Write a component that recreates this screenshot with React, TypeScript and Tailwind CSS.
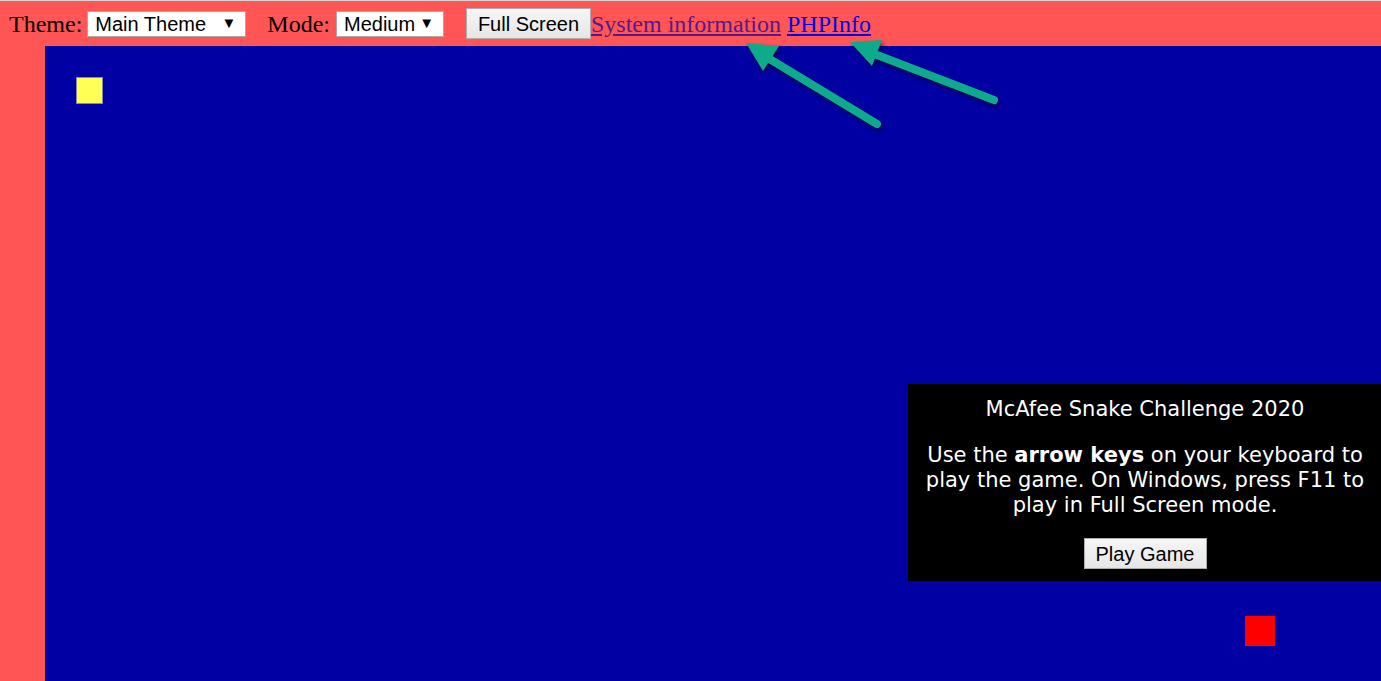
import React from 'react';

const FakeSelect: React.FC<{ label: string; width: string }> = ({ label, width }) => (
  <div
    className={`flex h-[26px] items-center justify-between border border-[#a9a9a9] bg-white pl-[7px] pr-[9px] text-[20px] text-black ${width}`}
    style={{ fontFamily: '"Liberation Sans", Arial, sans-serif' }}
  >
    <span>{label}</span>
    <span className="text-[15px]">▼</span>
  </div>
);

const Arrow: React.FC<{ tail: [number, number]; neck: [number, number]; head: string }> = ({ tail, neck, head }) => (
  <g>
    <line x1={tail[0]} y1={tail[1]} x2={neck[0]} y2={neck[1]} stroke="#0dab8b" strokeWidth="8" strokeLinecap="round" />
    <polygon points={head} fill="#0dab8b" />
  </g>
);

export default function App() {
  return (
    <div className="relative h-[681px] w-[1381px] overflow-hidden border-t border-[#d4d4d4] bg-[#ff5555]">
      {/* barre du haut */}
      <div
        className="flex h-[45px] items-center pl-[9px] text-[24px] text-black"
        style={{ fontFamily: '"Liberation Serif", "Times New Roman", serif' }}
      >
        <span>Theme:</span>
        <div className="ml-[5px]">
          <FakeSelect label="Main Theme" width="w-[159px]" />
        </div>
        <span className="ml-[21px]">Mode:</span>
        <div className="ml-[6px]">
          <FakeSelect label="Medium" width="w-[108px]" />
        </div>
        <button
          className="ml-[22px] h-[31px] w-[125px] border border-[#adadad] bg-gradient-to-b from-[#f6f6f6] to-[#e6e6e6] text-[20px] text-black"
          style={{ fontFamily: '"Liberation Sans", Arial, sans-serif' }}
        >
          Full Screen
        </button>
        <a className="text-[#551a8b] underline">System information</a>
        <a className="ml-[6px] text-[#0000ee] underline">PHPInfo</a>
      </div>

      {/* zone de jeu */}
      <div className="relative ml-[45px] h-[636px] bg-[#0000a3]">
        <div className="absolute left-[31px] top-[31px] h-[27px] w-[27px] border border-[#8a8aa0] bg-[#ffff55]" />
        <div className="absolute left-[1200px] top-[570px] h-[30px] w-[30px] bg-[#ff0000]" />

        <div
          className="absolute left-[863px] top-[338px] flex w-[474px] flex-col items-center bg-black pb-[12px] pt-[13px] text-center text-[21px] leading-[25px] text-white"
          style={{ fontFamily: '"DejaVu Sans", Verdana, sans-serif' }}
        >
          <p>McAfee Snake Challenge 2020</p>
          <p className="mt-[21px] px-[10px]">
            Use the <b>arrow keys</b> on your keyboard to play the game. On Windows, press F11 to play in Full Screen mode.
          </p>
          <button
            className="mt-[20px] h-[31px] w-[123px] border border-[#adadad] bg-gradient-to-b from-[#f6f6f6] to-[#e6e6e6] text-[20px] leading-none text-black"
            style={{ fontFamily: '"Liberation Sans", Arial, sans-serif' }}
          >
            Play Game
          </button>
        </div>
      </div>

      {/* flèches d'annotation */}
      <svg
        className="pointer-events-none absolute left-0 top-0"
        width="1381"
        height="681"
        style={{ filter: 'drop-shadow(2px 3px 2px rgba(0,0,40,0.6))' }}
      >
        <Arrow tail={[877, 123]} neck={[768, 57]} head="746,42 779,45 763,70" />
        <Arrow tail={[994, 99]} neck={[872, 52]} head="850,41 882,39 872,65" />
      </svg>
    </div>
  );
}
